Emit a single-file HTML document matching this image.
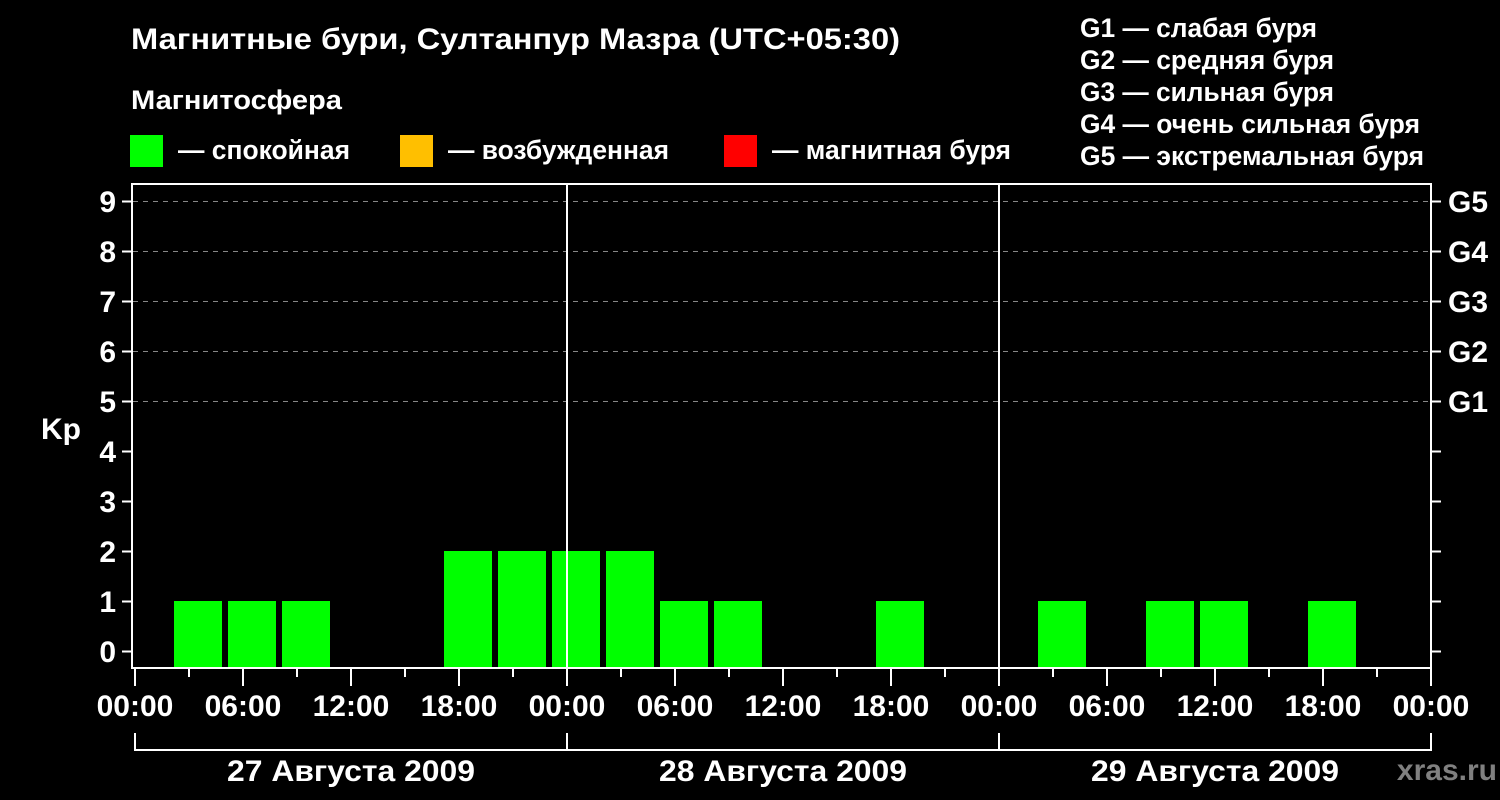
<!DOCTYPE html>
<html><head><meta charset="utf-8"><style>html,body{margin:0;padding:0;background:#000}svg{display:block}</style></head>
<body>
<svg width="1500" height="800" xmlns="http://www.w3.org/2000/svg" font-family="Liberation Sans, Arial, sans-serif" font-weight="bold" fill="#fff">
<rect width="1500" height="800" fill="#000"/>
<text x="131" y="49" font-size="30" textLength="769" lengthAdjust="spacingAndGlyphs">Магнитные бури, Султанпур Мазра (UTC+05:30)</text>
<text x="131" y="109" font-size="27" textLength="211" lengthAdjust="spacingAndGlyphs">Магнитосфера</text>
<rect x="130" y="135" width="33" height="32" fill="#00ff00"/>
<text x="178" y="159" font-size="27" textLength="172" lengthAdjust="spacingAndGlyphs">— спокойная</text>
<rect x="400" y="135" width="33" height="32" fill="#ffbf00"/>
<text x="448" y="159" font-size="27" textLength="221" lengthAdjust="spacingAndGlyphs">— возбужденная</text>
<rect x="724" y="135" width="33" height="32" fill="#ff0000"/>
<text x="772" y="159" font-size="27" textLength="239" lengthAdjust="spacingAndGlyphs">— магнитная буря</text>
<g font-size="27">
<text x="1080" y="37" textLength="237" lengthAdjust="spacingAndGlyphs">G1 — слабая буря</text>
<text x="1080" y="69" textLength="254" lengthAdjust="spacingAndGlyphs">G2 — средняя буря</text>
<text x="1080" y="101" textLength="254" lengthAdjust="spacingAndGlyphs">G3 — сильная буря</text>
<text x="1080" y="133" textLength="340" lengthAdjust="spacingAndGlyphs">G4 — очень сильная буря</text>
<text x="1080" y="165" textLength="344" lengthAdjust="spacingAndGlyphs">G5 — экстремальная буря</text>
</g>
<g stroke="#888" stroke-width="1" stroke-dasharray="5,5">
<line x1="133" y1="201.5" x2="1430" y2="201.5"/>
<line x1="133" y1="251.5" x2="1430" y2="251.5"/>
<line x1="133" y1="301.5" x2="1430" y2="301.5"/>
<line x1="133" y1="351.5" x2="1430" y2="351.5"/>
<line x1="133" y1="401.5" x2="1430" y2="401.5"/>
</g>
<g fill="#00ff00">
<rect x="174" y="601" width="48" height="67"/>
<rect x="228" y="601" width="48" height="67"/>
<rect x="282" y="601" width="48" height="67"/>
<rect x="444" y="551" width="48" height="117"/>
<rect x="498" y="551" width="48" height="117"/>
<rect x="552" y="551" width="48" height="117"/>
<rect x="606" y="551" width="48" height="117"/>
<rect x="660" y="601" width="48" height="67"/>
<rect x="714" y="601" width="48" height="67"/>
<rect x="876" y="601" width="48" height="67"/>
<rect x="1038" y="601" width="48" height="67"/>
<rect x="1146" y="601" width="48" height="67"/>
<rect x="1200" y="601" width="48" height="67"/>
<rect x="1308" y="601" width="48" height="67"/>
</g>
<g stroke="#fff" stroke-width="2" fill="none">
<rect x="132" y="184" width="1299" height="484"/>
<line x1="567" y1="184" x2="567" y2="668"/>
<line x1="999" y1="184" x2="999" y2="668"/>
<path d="M122 201.5H132M122 251.5H132M122 301.5H132M122 351.5H132M122 401.5H132M122 451.5H132M122 501.5H132M122 551.5H132M122 601.5H132M122 651.5H132"/>
<path d="M1431 201.5H1441M1431 251.5H1441M1431 301.5H1441M1431 351.5H1441M1431 401.5H1441M1431 451.5H1441M1431 501.5H1441M1431 551.5H1441M1431 601.5H1441M1431 651.5H1441"/>
<path d="M135 668V686M243 668V686M351 668V686M459 668V686M567 668V686M675 668V686M783 668V686M891 668V686M999 668V686M1107 668V686M1215 668V686M1323 668V686M1431 668V686"/>
<path d="M189 668V677M297 668V677M405 668V677M513 668V677M621 668V677M729 668V677M837 668V677M945 668V677M1053 668V677M1161 668V677M1269 668V677M1377 668V677"/>
<path d="M135 733V750H1431V733M567 733V750M999 733V750"/>
</g>
<g font-size="30" text-anchor="end">
<text x="116" y="212">9</text><text x="116" y="262">8</text><text x="116" y="312">7</text><text x="116" y="362">6</text><text x="116" y="412">5</text><text x="116" y="462">4</text><text x="116" y="512">3</text><text x="116" y="562">2</text><text x="116" y="612">1</text><text x="116" y="662">0</text>
</g>
<text x="41" y="439" font-size="30">Kp</text>
<g font-size="30">
<text x="1448" y="212">G5</text><text x="1448" y="262">G4</text><text x="1448" y="312">G3</text><text x="1448" y="362">G2</text><text x="1448" y="412">G1</text>
</g>
<g font-size="30" text-anchor="middle">
<text x="135" y="716">00:00</text><text x="243" y="716">06:00</text><text x="351" y="716">12:00</text><text x="459" y="716">18:00</text>
<text x="567" y="716">00:00</text><text x="675" y="716">06:00</text><text x="783" y="716">12:00</text><text x="891" y="716">18:00</text>
<text x="999" y="716">00:00</text><text x="1107" y="716">06:00</text><text x="1215" y="716">12:00</text><text x="1323" y="716">18:00</text>
<text x="1431" y="716">00:00</text>
<text x="351" y="781" textLength="248" lengthAdjust="spacingAndGlyphs">27 Августа 2009</text>
<text x="783" y="781" textLength="248" lengthAdjust="spacingAndGlyphs">28 Августа 2009</text>
<text x="1215" y="781" textLength="248" lengthAdjust="spacingAndGlyphs">29 Августа 2009</text>
</g>
<text x="1497" y="780" font-size="30" fill="#808080" text-anchor="end">xras.ru</text>
</svg>
</body></html>
